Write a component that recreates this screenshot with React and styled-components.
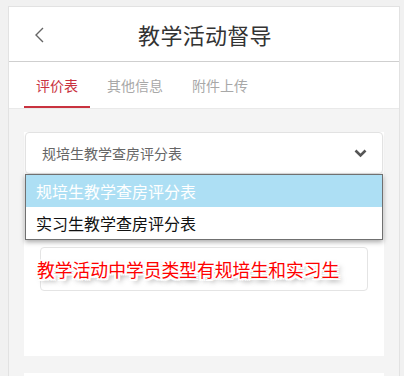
import React from 'react'
import styled, { createGlobalStyle } from 'styled-components'

const GlobalStyle = createGlobalStyle`
  html, body {
    margin: 0;
    padding: 0;
    background: #f1f1f1;
    font-family: "Noto Sans CJK SC", "Noto Sans", sans-serif;
  }
`

const Page = styled.div`
  width: 404px;
  height: 376px;
  overflow: hidden;
  padding: 6px 4px 0 8px;
  box-sizing: border-box;
`

const Phone = styled.div`
  width: 392px;
  height: 380px;
  box-sizing: border-box;
  background: #f4f4f4;
  border: 1px solid #e2e2e2;
  border-bottom: none;
`

const Header = styled.div`
  position: relative;
  height: 54px;
  background: #fff;
  border-bottom: 1px solid #cfcfcf;
  display: flex;
  align-items: center;
  justify-content: center;
`

const BackButton = styled.div`
  position: absolute;
  left: 25px;
  top: 20px;
  width: 12px;
  height: 16px;
  display: flex;
`

const Title = styled.div`
  font-size: 22px;
  color: #333;
  letter-spacing: 0.3px;
  margin-left: 2px;
`

const TabBar = styled.div`
  height: 46px;
  background: #fff;
  border-bottom: 1px solid #e9e9e9;
  display: flex;
  padding-left: 15px;
`

const Tab = styled.div`
  padding: 0 12px;
  margin-right: 5px;
  font-size: 14px;
  line-height: 46px;
  color: ${({ active }) => (active ? '#c9323f' : '#a8a8a8')};
  box-shadow: ${({ active }) => (active ? 'inset 0 -2px 0 #c9323f' : 'none')};
`

const Content = styled.div`
  padding: 23px 15px 0;
  display: flex;
  flex-direction: column;
  gap: 17px;
`

const Card = styled.div`
  position: relative;
  background: #fff;
  height: 224px;
`

const Select = styled.div`
  height: 42px;
  box-sizing: border-box;
  margin: 0 1px;
  border: 1px solid #e2e2e2;
  border-radius: 4px;
  box-shadow: 0 2px 3px rgba(0, 0, 0, 0.08);
  display: flex;
  align-items: center;
  justify-content: space-between;
  padding: 0 15px 0 16px;
  font-size: 14px;
  color: #666;
`

const Dropdown = styled.div`
  position: absolute;
  left: 1px;
  right: 1px;
  top: 42px;
  border: 1px solid #707070;
  background: #fff;
  box-shadow: 0 2px 5px rgba(0, 0, 0, 0.35);
  z-index: 2;
`

const Option = styled.div`
  height: 32px;
  line-height: 32px;
  padding-left: 10px;
  font-size: 16px;
  color: ${({ selected }) => (selected ? '#fff' : '#111')};
  background: ${({ selected }) => (selected ? '#addff4' : '#fff')};
`

const InputBox = styled.div`
  position: relative;
  margin: 73px 16px 0;
  height: 44px;
  box-sizing: border-box;
  border: 1px solid #e4e4e4;
  border-radius: 4px;
`

const Note = styled.div`
  position: absolute;
  left: -4px;
  top: 8px;
  white-space: nowrap;
  font-size: 17.8px;
  color: #ff0000;
  text-shadow: -2px -2px 0 #fff, 2px -2px 0 #fff, -2px 2px 0 #fff,
    2px 2px 0 #fff, 0 -2px 0 #fff, 0 2px 0 #fff, -2px 0 0 #fff, 2px 0 0 #fff,
    0 0 4px #fff, 3px 3px 5px rgba(0, 0, 0, 0.6);
`

const NextCard = styled.div`
  background: #fff;
  height: 40px;
`

const BackIcon = () => (
  <svg width="12" height="16" viewBox="0 0 12 16">
    <polyline
      points="9,1 2,8 9,15"
      fill="none"
      stroke="#666"
      strokeWidth="1.4"
    />
  </svg>
)

const ChevronDown = () => (
  <svg width="13" height="9" viewBox="0 0 13 9">
    <polyline
      points="1.5,1.5 6.5,6.5 11.5,1.5"
      fill="none"
      stroke="#555"
      strokeWidth="2.6"
    />
  </svg>
)

const tabs = ['评价表', '其他信息', '附件上传']
const options = ['规培生教学查房评分表', '实习生教学查房评分表']

export default function App() {
  return (
    <Page>
      <GlobalStyle />
      <Phone>
        <Header>
          <BackButton>
            <BackIcon />
          </BackButton>
          <Title>教学活动督导</Title>
        </Header>
        <TabBar>
          {tabs.map((t, i) => (
            <Tab key={t} active={i === 0}>
              {t}
            </Tab>
          ))}
        </TabBar>
        <Content>
          <Card>
            <Select>
              <span>规培生教学查房评分表</span>
              <ChevronDown />
            </Select>
            <Dropdown>
              {options.map((o, i) => (
                <Option key={o} selected={i === 0}>
                  {o}
                </Option>
              ))}
            </Dropdown>
            <InputBox>
              <Note>教学活动中学员类型有规培生和实习生</Note>
            </InputBox>
          </Card>
          <NextCard />
        </Content>
      </Phone>
    </Page>
  )
}
